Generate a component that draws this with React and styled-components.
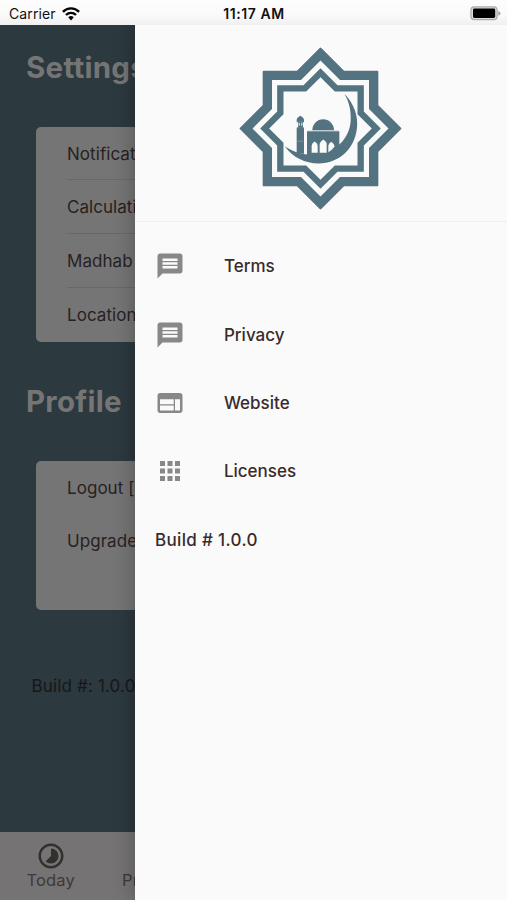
import React from 'react';
import styled, { createGlobalStyle } from 'styled-components';
import { MdMessage, MdWeb, MdApps, MdTimelapse } from 'react-icons/md';

const GlobalStyle = createGlobalStyle`
  * { box-sizing: border-box; }
  body { margin: 0; overflow: hidden; font-family: Inter, "Liberation Sans", sans-serif; }
`;

const Screen = styled.div`
  position: relative;
  display: flex;
  flex-direction: column;
  width: 507px;
  height: 900px;
  overflow: hidden;
  background: #2c393f;
`;

const StatusBar = styled.header`
  position: relative;
  z-index: 2;
  display: grid;
  grid-template-columns: 1fr auto 1fr;
  align-items: center;
  flex: none;
  height: 25px;
  padding: 2px 6px 0 9px;
  background: linear-gradient(#fdfdfd 0, #fafafa 60%, #f0f0f0 100%);
  color: #111;
  font-size: 14px;
`;

const Carrier = styled.div`
  display: flex;
  align-items: center;
  gap: 6px;
  letter-spacing: 0.1px;
`;

const Clock = styled.div`
  font-weight: 600;
  letter-spacing: 0.55px;
  margin-right: 2px;
`;

const BatterySlot = styled.div`
  display: flex;
  justify-content: flex-end;
`;

const Content = styled.main`
  flex: 1;
  padding-top: 20px;
`;

const Heading = styled.h1`
  height: 44px;
  margin: 0 0 37.5px 26px;
  color: #757575;
  font-size: 29.5px;
  font-weight: 700;
  line-height: 44px;
  letter-spacing: 0.25px;
`;

const Card = styled.section`
  width: 434px;
  height: ${(p) => p.$height}px;
  margin: 0 0 ${(p) => p.$after}px 36px;
  padding-left: 31px;
  border-radius: 5px;
  background: #757575;
`;

const SettingRow = styled.div`
  height: 53.7px;
  border-bottom: 1px solid ${(p) => (p.$divided ? '#686868' : 'transparent')};
  color: #282122;
  font-size: 17px;
  line-height: 55px;
  letter-spacing: 0.05px;
  white-space: nowrap;
`;

const BuildNote = styled.p`
  margin: 0 0 0 31.5px;
  color: #171719;
  font-size: 17px;
  line-height: 24px;
  letter-spacing: 0.15px;
`;

const TabBar = styled.nav`
  display: flex;
  flex: none;
  height: 68px;
  background: #757373;
`;

const Tab = styled.div`
  display: flex;
  flex-direction: column;
  align-items: center;
  width: 101.4px;
  padding-top: 9px;
  color: #3d3939;
  font-size: 16.5px;
  line-height: 20px;
  letter-spacing: 0.1px;

  svg { display: block; color: #332f2f; }
`;

const TabIconSpace = styled.div`
  height: 29px;
`;

const Drawer = styled.aside`
  position: absolute;
  z-index: 1;
  top: 25px;
  right: 0;
  bottom: 0;
  width: 371.6px;
  background: #fafafa;
  box-shadow: 0 0 20px rgba(0, 0, 0, 0.3);
`;

const DrawerHeader = styled.div`
  display: flex;
  justify-content: center;
  height: 197px;
  padding: 22px 0.5px 0 0;
  border-bottom: 1px solid #efefef;
`;

const Menu = styled.ul`
  margin: 0;
  padding: 10px 0 0;
  list-style: none;
`;

const MenuItem = styled.li`
  display: flex;
  align-items: center;
  height: 68.4px;
  padding-left: 19.5px;
  color: #392a2c;
  font-size: 17px;
  font-weight: 500;
  letter-spacing: ${(p) => (p.$plain ? 0.35 : 0)}px;

  svg { flex: none; margin-right: 39px; color: #888; }
`;

const starPoints = (tip, half) => {
  const n = tip - half;
  return [
    [0, -tip], [n, -half], [half, -half], [half, -n],
    [tip, 0], [half, n], [half, half], [n, half],
    [0, tip], [-n, half], [-half, half], [-half, n],
    [-tip, 0], [-half, -n], [-half, -half], [-n, -half],
  ].map(([x, y]) => `${272.5 + x},${265 + y}`).join(' ');
};

const Logo = () => (
  <svg width="163" height="163" viewBox="28 20.5 489 489" fill="#537380">
    <polygon points={starPoints(239, 170)} stroke="#537380" strokeWidth="7" strokeLinejoin="round" />
    <polygon points={starPoints(204, 145.5)} fill="#fafafa" />
    <polygon points={starPoints(181, 130)} />
    <polygon points={starPoints(154, 111)} fill="#fafafa" />
    <path d="M344 161C373 190 386 228 382 263C376 326 328 370 267 370C226 369 190 352 165 318C193 337 222 344 252 343C319 341 360 294 363 242C365 212 358 184 344 161Z" />
    <path d="M248 270A32.5 33 0 0 1 313 270Z" />
    <path d="M232 273H329V345H232Z" />
    <path d="M201 239C202 232 208 230 212 227C216 230 222 232 223 239V246H220V262H223V341L201 340V262H205V246H201Z" />
    <path d="M207 248h3v9h-3zM215 248h3v9h-3z" fill="#fafafa" />
    <path d="M202 303h20" stroke="#87a0a9" strokeWidth="2" />
    <path d="M202 263h20M202 244h20M235 272h92" stroke="#87a0a9" strokeWidth="1" />
    <path d="M246 338V316Q247 309 255 304Q263 309 264 316V338ZM270 338V311Q272 303 281 298Q290 304 291 311V338ZM296 336V316Q297 310 305 305Q313 311 315 319Q307 330 296 336Z" fill="#fafafa" />
  </svg>
);

const WifiIcon = () => (
  <svg width="18" height="14" viewBox="0 0 18 14" fill="none" stroke="#050505" strokeWidth="2.4">
    <path d="M.9 4.8C5.4.2 12.6.2 17.1 4.8" />
    <path d="M4 8C6.8 5.2 11.2 5.2 14 8" />
    <path d="M6.2 10.2Q9 7.8 11.8 10.2L9 13.4Z" fill="#050505" stroke="none" />
  </svg>
);

const BatteryIcon = () => (
  <svg width="31" height="15" viewBox="0 0 31 15">
    <rect x=".9" y=".9" width="26.2" height="12.8" rx="3.4" fill="#ddd" stroke="#aaa" strokeWidth="1.2" />
    <rect x="3" y="2.6" width="22.2" height="9.4" rx="1.4" fill="#000" />
    <path d="M28.2 5Q30.6 6 30.6 7.4T28.2 9.8Z" fill="#aaa" />
  </svg>
);

const settings = ['Notifications', 'Calculation', 'Madhab', 'Location'];
const account = ['Logout [', 'Upgrade'];
const links = [
  [MdMessage, 'Terms'],
  [MdMessage, 'Privacy'],
  [MdWeb, 'Website'],
  [MdApps, 'Licenses'],
];

export default function App() {
  return (
    <Screen>
      <GlobalStyle />
      <StatusBar>
        <Carrier>Carrier <WifiIcon /></Carrier>
        <Clock>11:17 AM</Clock>
        <BatterySlot><BatteryIcon /></BatterySlot>
      </StatusBar>
      <Content>
        <Heading>Settings</Heading>
        <Card $height={215} $after={37.5}>
          {settings.map((label, i) => (
            <SettingRow key={label} $divided={i < settings.length - 1}>{label}</SettingRow>
          ))}
        </Card>
        <Heading>Profile</Heading>
        <Card $height={149} $after={64}>
          {account.map((label) => <SettingRow key={label}>{label}</SettingRow>)}
        </Card>
        <BuildNote>Build #: 1.0.0</BuildNote>
      </Content>
      <TabBar>
        <Tab><TabIconSpace><MdTimelapse size={30} /></TabIconSpace>Today</Tab>
        <Tab><TabIconSpace />Prayers</Tab>
      </TabBar>
      <Drawer>
        <DrawerHeader><Logo /></DrawerHeader>
        <Menu>
          {links.map(([Icon, label]) => (
            <MenuItem key={label}><Icon size={30} />{label}</MenuItem>
          ))}
          <MenuItem $plain>Build # 1.0.0</MenuItem>
        </Menu>
      </Drawer>
    </Screen>
  );
}
